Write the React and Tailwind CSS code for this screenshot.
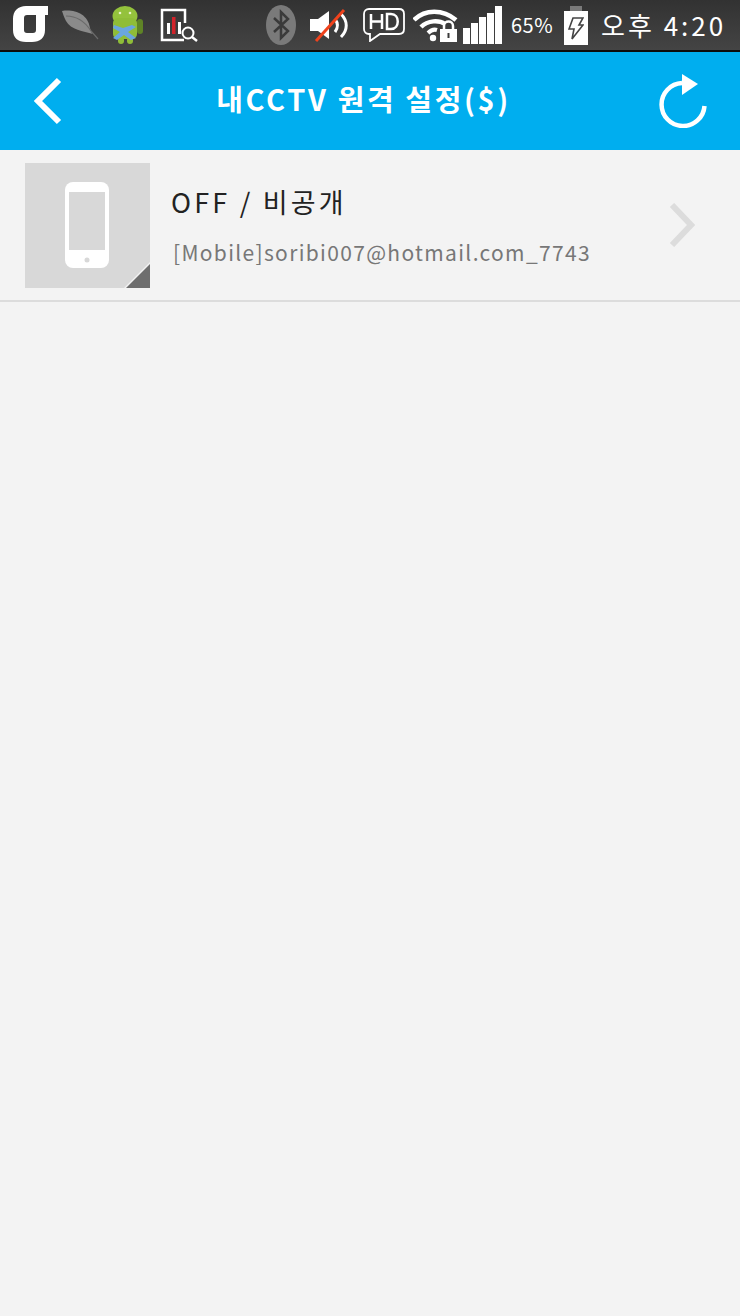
import React from 'react';

const hand = "font-['Noto_Sans_CJK_KR','Noto_Sans',sans-serif]";

const LogoIcon = () => (
  <svg width="36" height="38" viewBox="0 0 36 38">
    <path fillRule="evenodd" d="M35 0 V9 H32 V24 C32 32 27 36 19 36 H13 C5 36 0 32 0 24 V13 C0 5 5 0 13 0 Z M14 9 C12 9 11 10 11 12 V24 C11 26 12 27 14 27 H20 C22 27 23 26 23 24 V9 Z" fill="#fff" />
  </svg>
);

const LeafIcon = () => (
  <svg width="38" height="30" viewBox="0 0 38 30">
    <path d="M1 1 C12 -1 27 3 29 18 C30 22 31 23 32 24 C22 21 10 20 5 11 C3 7 2 4 1 1 Z" fill="#8a8a8a" />
    <path d="M5 6 C14 6 23 10 30 21 L37 29" fill="none" stroke="#6a6a6a" strokeWidth="1.2" />
  </svg>
);

const AndroidIcon = () => (
  <svg width="36" height="40" viewBox="0 0 36 40">
    <ellipse cx="15" cy="11" rx="12.5" ry="10" fill="#94c23c" />
    <rect x="3" y="13" width="24" height="21" rx="5" fill="#8fbd38" />
    <rect x="27" y="14" width="6" height="15" rx="3" fill="#5f8426" />
    <rect x="8" y="32" width="6" height="7" rx="3" fill="#8fbd38" />
    <rect x="17" y="32" width="6" height="7" rx="3" fill="#8fbd38" />
    <circle cx="10" cy="8" r="1.3" fill="#e8f2c8" />
    <circle cx="20" cy="8" r="1.3" fill="#e8f2c8" />
    <path d="M4 20 L13 23 L22 20 L26 22 L18 27 L26 33 L21 35 L14 30 L7 35 L3 33 L10 27 L3 23 Z" fill="#6aa6e0" />
  </svg>
);

const ReportIcon = () => (
  <svg width="38" height="34" viewBox="0 0 38 34">
    <path d="M24 32 H2 V2 H25 V15" fill="none" stroke="#fff" strokeWidth="2.5" />
    <rect x="7" y="15" width="3" height="11" fill="#fff" />
    <rect x="12" y="9" width="3.5" height="17" fill="#d2232a" />
    <rect x="18" y="14" width="3" height="12" fill="#fff" />
    <circle cx="28" cy="25" r="5.5" fill="none" stroke="#fff" strokeWidth="2" />
    <path d="M32 29 L37 33" stroke="#fff" strokeWidth="2.5" />
  </svg>
);

const BluetoothIcon = () => (
  <svg width="30" height="40" viewBox="0 0 30 40">
    <ellipse cx="15" cy="20" rx="15" ry="20" fill="#7a7a7a" />
    <path d="M8 13 L22 26 L15 33 V7 L22 14 L8 27" fill="none" stroke="#3a3a3a" strokeWidth="2.5" />
  </svg>
);

const SpeakerIcon = () => (
  <svg width="40" height="34" viewBox="0 0 40 34">
    <path d="M0 11 H8 L19 3 V31 L8 23 H0 Z" fill="#fff" />
    <path d="M25 11 C28 15 28 20 25 24" fill="none" stroke="#fff" strokeWidth="3" />
    <path d="M31 6 C38 13 38 22 31 29" fill="none" stroke="#fff" strokeWidth="3" />
    <path d="M6 33 L34 2" stroke="#f0421c" strokeWidth="3" />
  </svg>
);

const HdIcon = () => (
  <svg width="42" height="34" viewBox="0 0 42 34">
    <path d="M6 1 H36 C39 1 41 3 41 6 V21 C41 24 39 26 36 26 H17 L7 33 V26 H6 C3 26 1 24 1 21 V6 C1 3 3 1 6 1 Z" fill="none" stroke="#fff" strokeWidth="1.8" />
    <path d="M8 6 V21 M19 6 V21 M8 13.5 H19" fill="none" stroke="#fff" strokeWidth="2.5" />
    <path d="M24 6 V21 H28 C37 21 37 6 28 6 Z" fill="none" stroke="#fff" strokeWidth="2.5" />
  </svg>
);

const WifiIcon = () => (
  <svg width="45" height="34" viewBox="0 0 45 34">
    <path d="M1 12 C12 1 30 1 43 12" fill="none" stroke="#fff" strokeWidth="4.5" />
    <path d="M8 19 C15 12 26 12 32 16" fill="none" stroke="#fff" strokeWidth="4.5" />
    <path d="M15 25 C18 22 21 21 24 22" fill="none" stroke="#fff" strokeWidth="4" />
    <circle cx="20" cy="30" r="3.2" fill="#fff" />
    <rect x="27" y="21" width="17" height="13" fill="#fff" />
    <path d="M31 21 V18 C31 12 40 12 40 18 V21" fill="none" stroke="#fff" strokeWidth="2.5" />
    <rect x="34.5" y="25" width="2" height="5" fill="#3a3a3a" />
  </svg>
);

const SignalIcon = () => (
  <div className="flex items-end gap-[1px] h-[38px]">
    <div className="w-[7px] h-[16px] bg-white" />
    <div className="w-[7px] h-[21px] bg-white" />
    <div className="w-[7px] h-[27px] bg-white" />
    <div className="w-[7px] h-[31px] bg-white" />
    <div className="w-[7px] h-[38px] bg-white" />
  </div>
);

const BatteryIcon = () => (
  <div className="flex flex-col items-center">
    <div className="w-[12px] h-[5px] bg-[#7a7a7a]" />
    <div className="w-[24px] h-[34px] bg-white flex items-center justify-center">
      <svg width="16" height="24" viewBox="0 0 16 24">
        <path d="M5 2 H15 L11 9 H15 L4 23 L6 13 H1 Z" fill="none" stroke="#444" strokeWidth="1.6" />
      </svg>
    </div>
  </div>
);

const StatusBar = () => (
  <div className="flex items-center h-[50px] pl-[13px] bg-gradient-to-b from-[#323232] to-[#444444] border-b-2 border-[#0c0c0c] box-content">
    <LogoIcon />
    <div className="ml-[12px]"><LeafIcon /></div>
    <div className="ml-[11px]"><AndroidIcon /></div>
    <div className="ml-[14px]"><ReportIcon /></div>
    <div className="ml-[68px]"><BluetoothIcon /></div>
    <div className="ml-[14px]"><SpeakerIcon /></div>
    <div className="ml-[13px]"><HdIcon /></div>
    <div className="ml-[8px]"><WifiIcon /></div>
    <div className="ml-[5px]"><SignalIcon /></div>
    <span className={`ml-[9px] w-[44px] text-[20px] tracking-[0.5px] text-white ${hand}`}>65%</span>
    <div className="ml-[9px]"><BatteryIcon /></div>
    <span className={`ml-[13px] text-[26px] tracking-[3px] leading-none whitespace-nowrap text-white ${hand}`}>오후 4:20</span>
  </div>
);

const Header = () => (
  <div className="flex items-center justify-between h-[98px] bg-[#00aeef] pl-[32px] pr-[33px]">
    <svg width="30" height="48" viewBox="0 0 30 48">
      <path d="M27 3 L6 24 L27 45" fill="none" stroke="#fff" strokeWidth="6" />
    </svg>
    <h1 className={`text-[29px] font-bold tracking-[2.6px] leading-none whitespace-nowrap text-white ml-[6px] mb-[6px] ${hand}`}>내CCTV 원격 설정($)</h1>
    <svg width="48" height="54" viewBox="0 0 48 54">
      <path d="M45.5 32 A21.5 21.5 0 1 1 23 9" fill="none" stroke="#fff" strokeWidth="4.5" />
      <path d="M23 0 L39 10 L23 21 Z" fill="#fff" />
    </svg>
  </div>
);

const DeviceRow = () => (
  <div className="flex items-center h-[152px] pl-[25px] pr-[45px] border-b-2 border-[#dcdcdc]">
    <div className="relative flex items-center justify-center w-[125px] h-[125px] pr-[2px] bg-[#d8d8d8] overflow-hidden shrink-0">
      <svg width="44" height="86" viewBox="0 0 44 86">
        <rect x="0" y="0" width="44" height="86" rx="8" fill="#fff" />
        <rect x="4" y="10" width="36" height="58" fill="#d8d8d8" />
        <circle cx="22" cy="78" r="2.5" fill="#d8d8d8" />
      </svg>
      <svg className="absolute right-0 bottom-0" width="26" height="26" viewBox="0 0 26 26">
        <path d="M26 0 V26 H0 Z" fill="#f2f2f2" />
        <path d="M26 2 V26 H2 Z" fill="#6e6e6e" />
      </svg>
    </div>
    <div className="ml-[21px] flex-1 min-w-0">
      <div className={`text-[27px] tracking-[3.2px] leading-none text-[#222222] ${hand}`}>OFF / 비공개</div>
      <div className={`mt-[27px] ml-[2px] text-[21px] tracking-[1.33px] leading-none whitespace-nowrap text-[#777777] ${hand}`}>[Mobile]soribi007@hotmail.com_7743</div>
    </div>
    <svg width="26" height="44" viewBox="0 0 26 44">
      <path d="M3 2 L22 22 L3 42" fill="none" stroke="#dcdcdc" strokeWidth="6" />
    </svg>
  </div>
);

export default function App() {
  return (
    <div className="w-[740px] h-[1316px] bg-[#f3f3f3] overflow-hidden">
      <StatusBar />
      <Header />
      <DeviceRow />
    </div>
  );
}
